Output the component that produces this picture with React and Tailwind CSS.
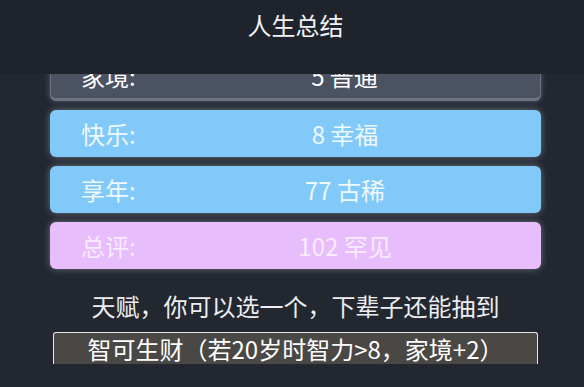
export default function App() {
  const font = { fontFamily: '"Noto Sans CJK SC", "Noto Sans", sans-serif' };
  const rows = [
    { label: "快乐:", value: "8 幸福", cls: "bg-[#80c9f9] text-[#eef8ff]" },
    { label: "享年:", value: "77 古稀", cls: "bg-[#80c9f9] text-[#eef8ff]" },
    { label: "总评:", value: "102 罕见", cls: "bg-[#e7bdfb] text-[#f8ecff]" },
  ];
  return (
    <div className="w-[584px] h-[387px] overflow-hidden bg-[#222730] flex flex-col pl-[50px] pr-[43px]" style={font}>
      <div className="relative z-10 h-[74px] -ml-[50px] -mr-[43px] bg-[#1f232b] flex items-start justify-center pt-[8px] pl-[7px]">
        <span className="text-[24px] leading-[34px] text-[#f1f3f6]">人生总结</span>
      </div>
      <div className="flex flex-col gap-[9px] -mt-[20px]">
        <div className="h-[47px] rounded-[6px] bg-[#4b5261] border-b-[3px] border-x border-[#6e7480] text-white flex items-center pl-[30px] pr-[31px] shadow-[0_0_6px_rgba(190,200,220,0.35)]">
          <span className="w-[99px] text-[24px] leading-none">家境:</span>
          <span className="flex-1 text-center text-[24px] leading-none">5 普通</span>
        </div>
        {rows.map((r) => (
          <div key={r.label} className={`h-[47px] rounded-[6px] flex items-center pl-[31px] pr-[31px] shadow-[0_0_7px_rgba(200,210,230,0.45)] ${r.cls}`}>
            <span className="w-[99px] text-[24px] leading-none">{r.label}</span>
            <span className="flex-1 text-center text-[24px] leading-none">{r.value}</span>
          </div>
        ))}
      </div>
      <div className="mt-[22px] text-center text-[24px] leading-[30px] text-[#eceef1]">
        天赋，你可以选一个，下辈子还能抽到
      </div>
      <div className="mt-[11px] mx-[3px] h-[32px] rounded-t-[3px] border-x border-t border-[#e8e8e8] bg-[#4a4845] flex items-center justify-center text-[24px] leading-none text-white">
        智可生财（若20岁时智力&gt;8，家境+2）
      </div>
    </div>
  );
}
